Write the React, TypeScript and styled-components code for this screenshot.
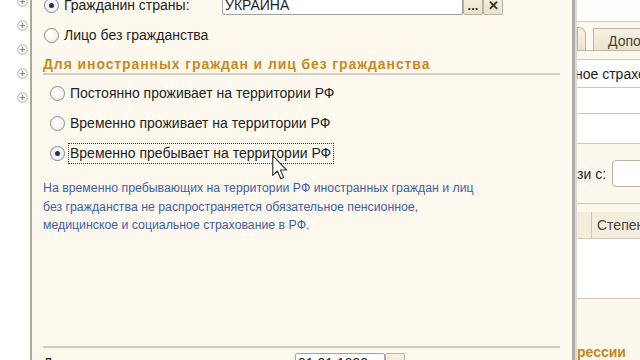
import React from 'react';
import styled, { createGlobalStyle } from 'styled-components';

const GlobalStyle = createGlobalStyle`
  html, body { margin: 0; padding: 0; overflow: hidden; background: #fff; }
  body { font-family: "Liberation Sans", Arial, sans-serif; color: #1e1e1e; }
`;

const Screen = styled.div`
  position: relative;
  display: flex;
  width: 640px;
  height: 360px;
  overflow: hidden;
  background: #fff;
`;

/* left tree gutter with expand icons */
const Gutter = styled.div`
  flex: none;
  width: 30px;
  display: flex;
  flex-direction: column;
  align-items: flex-end;
  gap: 13px;
  padding-right: 2px;
  box-sizing: border-box;
  margin-top: -4px;
`;

const Dialog = styled.div`
  flex: none;
  width: 545px;
  height: 360px;
  display: flex;
  flex-direction: column;
  background: #fdf9ef;
  border-left: 2px solid #a9a7a2;
  border-right: 3px solid #aeaca6;
  padding: 0 12px 0 11px;
  box-sizing: border-box;
`;

const Row = styled.div<{ $h: number; $indent?: number }>`
  display: flex;
  align-items: center;
  height: ${({ $h }) => $h}px;
  padding-left: ${({ $indent }) => $indent ?? 0}px;
  font-size: 14px;
  flex: none;
`;

const TopRow = styled(Row)`
  margin-top: -6px;
  margin-bottom: 8px;
`;

const RadioMark = styled.span<{ $checked?: boolean }>`
  position: relative;
  flex: none;
  width: 13px;
  height: 13px;
  border-radius: 50%;
  border: 1px solid ${({ $checked }) => ($checked ? '#7c8593' : '#8c8c8c')};
  background: ${({ $checked }) =>
    $checked
      ? 'radial-gradient(circle at 50% 50%, #e6ebf3 0%, #f6f7fa 70%)'
      : 'radial-gradient(circle at 35% 35%, #ffffff 0%, #f3f1ea 75%)'};
  margin: 0 3px 0 1px;

  &::after {
    content: '';
    display: ${({ $checked }) => ($checked ? 'block' : 'none')};
    position: absolute;
    left: 4px;
    top: 4px;
    width: 5px;
    height: 5px;
    border-radius: 50%;
    background: #2f3136;
  }
`;

const RadioText = styled.span<{ $focused?: boolean }>`
  white-space: nowrap;
  padding: 1px 2px 2px 1px;
  border: 1px dotted ${({ $focused }) => ($focused ? '#3a3a3a' : 'transparent')};
`;

const FieldLabel = styled.div`
  display: flex;
  align-items: center;
  width: 179px;
`;

const TextBox = styled.div<{ $w: number }>`
  display: flex;
  align-items: center;
  height: 20px;
  width: ${({ $w }) => $w}px;
  box-sizing: border-box;
  border: 1px solid #a3a3a0;
  background: #fff;
  padding-left: 2px;
  font-size: 14px;
  border-radius: 2px;
`;

const BoxButton = styled.div`
  display: flex;
  align-items: center;
  justify-content: center;
  width: 20px;
  height: 20px;
  box-sizing: border-box;
  border: 1px solid #b8b2a0;
  background: linear-gradient(#f7f2e4, #e9e1c9);
  font-size: 13px;
  font-weight: bold;
  color: #333;
  border-radius: 2px;
`;

const SectionTitle = styled.div`
  height: 18px;
  margin-top: 9px;
  display: flex;
  align-items: center;
  font-size: 14px;
  font-weight: bold;
  letter-spacing: 0.9px;
  color: #c98a1c;
  border-bottom: 2px solid #d3cebf;
  white-space: nowrap;
  flex: none;
`;

const Options = styled.div`
  display: flex;
  flex-direction: column;
  margin-top: 3px;
`;

const Note = styled.p`
  margin: 11px 0 0;
  font-size: 12.3px;
  line-height: 18.5px;
  color: #3d5ea8;
`;

const Footer = styled.div`
  margin-top: auto;
  border-top: 2px solid #cfcabd;
  height: 14px;
  box-sizing: border-box;
  flex: none;
  display: flex;
  align-items: flex-start;
  padding-top: 5px;
  font-size: 14px;
`;

const FooterLabel = styled.div`
  width: 252px;
  margin-top: 2px;
`;

/* right-hand main form, mostly cut off */
const RightPanel = styled.div`
  flex: none;
  width: 65px;
  height: 360px;
  overflow: hidden;
  border-left: 2px solid #dcd9d1;
  background: #fcf8ed;
  display: flex;
  flex-direction: column;
  font-size: 14px;
`;

const Band = styled.div<{ $h: number; $bg?: string; $line?: boolean }>`
  flex: none;
  height: ${({ $h }) => $h}px;
  background: ${({ $bg }) => $bg ?? 'transparent'};
  border-bottom: ${({ $line }) => ($line ? '1px solid #cfcabb' : 'none')};
  display: flex;
  align-items: center;
  white-space: nowrap;
  width: 200px;
`;

const TabStrip = styled.div`
  flex: none;
  height: 28px;
  width: 200px;
  display: flex;
  align-items: flex-end;
  gap: 7px;
  border-bottom: 1px solid #bdb7a6;
`;

const Tab = styled.div<{ $w: number; $top: number }>`
  width: ${({ $w }) => $w}px;
  height: ${({ $top }) => 28 - $top}px;
  box-sizing: border-box;
  border: 1px solid #bdb7a6;
  border-bottom: none;
  border-radius: 0 7px 0 0;
  background: linear-gradient(#f6f1e3, #ebe3cc);
  padding: 4px 0 0 14px;
  color: #444;
  font-size: 14px;
`;

const SmallInput = styled.div`
  margin-left: 6px;
  width: 80px;
  height: 25px;
  border: 1px solid #b7b2a4;
  border-radius: 4px;
  background: #fff;
`;

const HeaderCell = styled.div<{ $w: number }>`
  width: ${({ $w }) => $w}px;
  height: 100%;
  box-sizing: border-box;
  border-right: 1px solid #cfc8b4;
  display: flex;
  align-items: center;
  padding-left: 5px;
  color: #444;
`;

const Accent = styled.span`
  font-weight: bold;
  color: #c48719;
`;

const Cursor = styled.svg`
  position: absolute;
  left: 272px;
  top: 155px;
`;

const ExpandIcon = () => (
  <svg width="11" height="11" viewBox="0 0 11 11">
    <circle cx="5.5" cy="5.5" r="4.8" fill="#fff" stroke="#a8a8a8" strokeWidth="1" />
    <path d="M3 5.5h5M5.5 3v5" stroke="#8a8a8a" strokeWidth="1" />
  </svg>
);

const Radio = ({ label, checked, focused }: { label: string; checked?: boolean; focused?: boolean }) => (
  <>
    <RadioMark $checked={checked} />
    <RadioText $focused={focused}>{label}</RadioText>
  </>
);

export default function App() {
  return (
    <Screen>
      <GlobalStyle />
      <Gutter>
        {[0, 1, 2, 3, 4].map((i) => (
          <ExpandIcon key={i} />
        ))}
      </Gutter>

      <Dialog>
        <TopRow $h={22}>
          <FieldLabel>
            <Radio label="Гражданин страны:" checked />
          </FieldLabel>
          <TextBox $w={241}>УКРАИНА</TextBox>
          <BoxButton>...</BoxButton>
          <BoxButton>✕</BoxButton>
        </TopRow>
        <Row $h={22}>
          <Radio label="Лицо без гражданства" />
        </Row>

        <SectionTitle>Для иностранных граждан и лиц без гражданства</SectionTitle>

        <Options>
          <Row $h={30} $indent={6}>
            <Radio label="Постоянно проживает на территории РФ" />
          </Row>
          <Row $h={30} $indent={6}>
            <Radio label="Временно проживает на территории РФ" />
          </Row>
          <Row $h={30} $indent={6}>
            <Radio label="Временно пребывает на территории РФ" checked focused />
          </Row>
        </Options>

        <Note>
          На временно пребывающих на территории РФ иностранных граждан и лиц
          <br />
          без гражданства не распространяется обязательное пенсионное,
          <br />
          медицинское и социальное страхование в РФ.
        </Note>

        <Footer>
          <FooterLabel>Дата рождения:</FooterLabel>
          <TextBox $w={90}>01.01.1993</TextBox>
          <BoxButton />
        </Footer>
      </Dialog>

      <RightPanel>
        <Band $h={21} $bg="#fefefc" $line />
        <TabStrip>
          <Tab $w={9} $top={5} style={{ padding: 0 }} />
          <Tab $w={110} $top={6}>Дополнительно</Tab>
        </TabStrip>
        <Band $h={8} $line />
        <Band $h={27} $bg="#fff" $line>
          <span style={{ marginLeft: -2 }}>ное страхование</span>
        </Band>
        <Band $h={25} $bg="#fff" $line />
        <Band $h={29} $bg="#fff" $line />
        <Band $h={59} $line>
          зи с:
          <SmallInput />
        </Band>
        <Band $h={8} />
        <Band $h={26} $bg="#f3eddc" $line>
          <HeaderCell $w={15} />
          <HeaderCell $w={120}>Степень</HeaderCell>
        </Band>
        <Band $h={59} $bg="#fff" $line />
        <Band $h={45} />
        <Band $h={16}>
          <Accent>рессии</Accent>
        </Band>
      </RightPanel>

      <Cursor width="16" height="25" viewBox="0 0 12 19">
        <path
          d="M0.5 0.5 L0.5 15.5 L4 12.2 L6.6 18 L8.8 17 L6.3 11.4 L11 11.4 Z"
          fill="#fff"
          stroke="#3a3a3a"
          strokeWidth="0.9"
          strokeLinejoin="round"
        />
      </Cursor>
    </Screen>
  );
}
